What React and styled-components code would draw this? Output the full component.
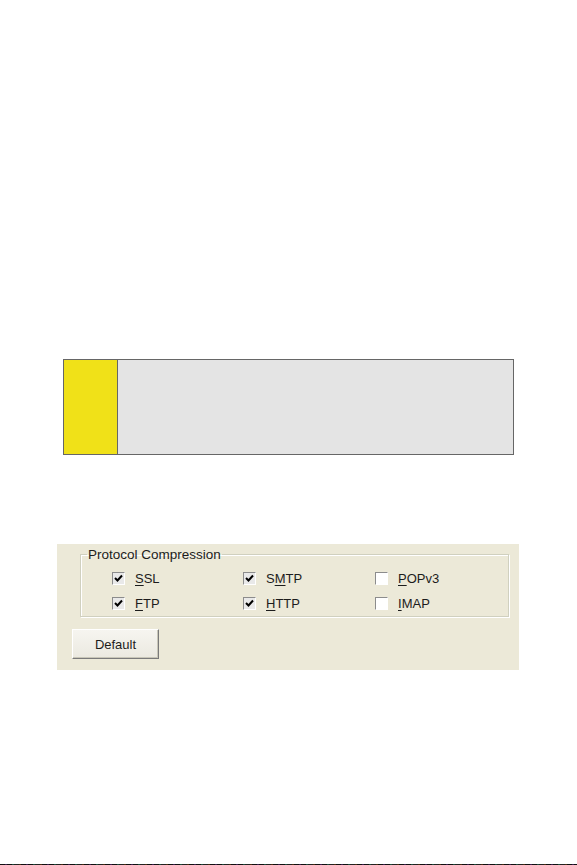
import React from 'react'
import styled, { createGlobalStyle } from 'styled-components'

const Global = createGlobalStyle`
  html, body { margin: 0; padding: 0; background: #fff; }
  body { font-family: "Liberation Sans", Arial, sans-serif; }
`

const protocols = [
  { pre: '', key: 'S', post: 'SL', checked: true },
  { pre: 'S', key: 'M', post: 'TP', checked: true },
  { pre: '', key: 'P', post: 'OPv3', checked: false },
  { pre: '', key: 'F', post: 'TP', checked: true },
  { pre: '', key: 'H', post: 'TTP', checked: true },
  { pre: '', key: 'I', post: 'MAP', checked: false },
]

const Page = () => (
  <Wrapper>
    <Global />
    <Callout>
      <CalloutMark />
      <CalloutBody />
    </Callout>
    <Panel>
      <Group>
        <Legend>Protocol Compression</Legend>
        <Options>
          {protocols.map((p, i) => (
            <Option key={i}>
              <Box checked={p.checked}>
                {p.checked && (
                  <svg width="9" height="9" viewBox="0 0 9 9">
                    <path d="M1 4 L3.5 6.5 L8 1.5" fill="none" stroke="#000" strokeWidth="2" />
                  </svg>
                )}
              </Box>
              <Label>
                {p.pre}
                <u>{p.key}</u>
                {p.post}
              </Label>
            </Option>
          ))}
        </Options>
      </Group>
      <Button>Default</Button>
    </Panel>
    <ScanLine />
  </Wrapper>
)

export default function App() {
  return <Page />
}

const Wrapper = styled.div`
  display: flex;
  flex-direction: column;
  min-height: 865px;
  padding-top: 359px;
  box-sizing: border-box;
`
const Callout = styled.div`
  display: flex;
  margin-left: 63px;
  width: 451px;
  height: 96px;
  border: 1px solid #666;
  box-sizing: border-box;
`
const CalloutMark = styled.div`
  width: 53px;
  background: #f0e118;
  border-right: 1px solid #666;
`
const CalloutBody = styled.div`
  flex: 1;
  background: #e4e4e4;
`
const Panel = styled.div`
  display: flex;
  flex-direction: column;
  align-items: flex-start;
  margin: 89px 0 0 57px;
  width: 462px;
  padding: 3px 10px 11px 15px;
  box-sizing: border-box;
  background: #ece9d8;
`
const Group = styled.fieldset`
  align-self: stretch;
  margin: 0 0 0 8px;
  padding: 0;
  border: 1px solid #d0d0bf;
  box-shadow: inset 1px 1px 0 #fff, 1px 1px 0 #fff;
`
const Legend = styled.legend`
  margin-left: 6px;
  padding: 0 1px;
  font-size: 13.5px;
  line-height: 15px;
  color: #1c1c1c;
`
const Options = styled.div`
  display: grid;
  grid-template-columns: 131px 132px 1fr;
  grid-auto-rows: 25px;
  padding: 4px 0 0 31px;
`
const Option = styled.label`
  display: flex;
  align-items: center;
  gap: 10px;
`
const Box = styled.span`
  display: flex;
  align-items: center;
  justify-content: center;
  width: 13px;
  height: 13px;
  box-sizing: border-box;
  border-top: 1px solid #8c8c8c;
  border-left: 1px solid #8c8c8c;
  border-right: 1px solid #fff;
  border-bottom: 1px solid #fff;
  background: ${p => (p.checked ? '#e9e9e9' : '#fff')};
`
const Label = styled.span`
  font-size: 13px;
  color: #1c1c1c;
  u { text-underline-offset: 2px; }
`
const Button = styled.button`
  margin-top: 12px;
  width: 87px;
  height: 30px;
  font-family: "Liberation Sans", Arial, sans-serif;
  font-size: 13px;
  color: #1c1c1c;
  background: linear-gradient(#f6f5f0, #ebe9e0);
  border: 1px solid;
  border-color: #fff #7a7a7a #7a7a7a #fff;
  box-shadow: inset -1px -1px 0 #c8c6b8;
  padding: 0;
`
const ScanLine = styled.div`
  margin-top: auto;
  height: 1px;
  background: repeating-linear-gradient(90deg, #111 0 5px, #3a1a4a 5px 7px, #111 7px 12px, #1a4a3a 12px 14px, #222 14px 19px, #4a2a10 19px 21px);
`
